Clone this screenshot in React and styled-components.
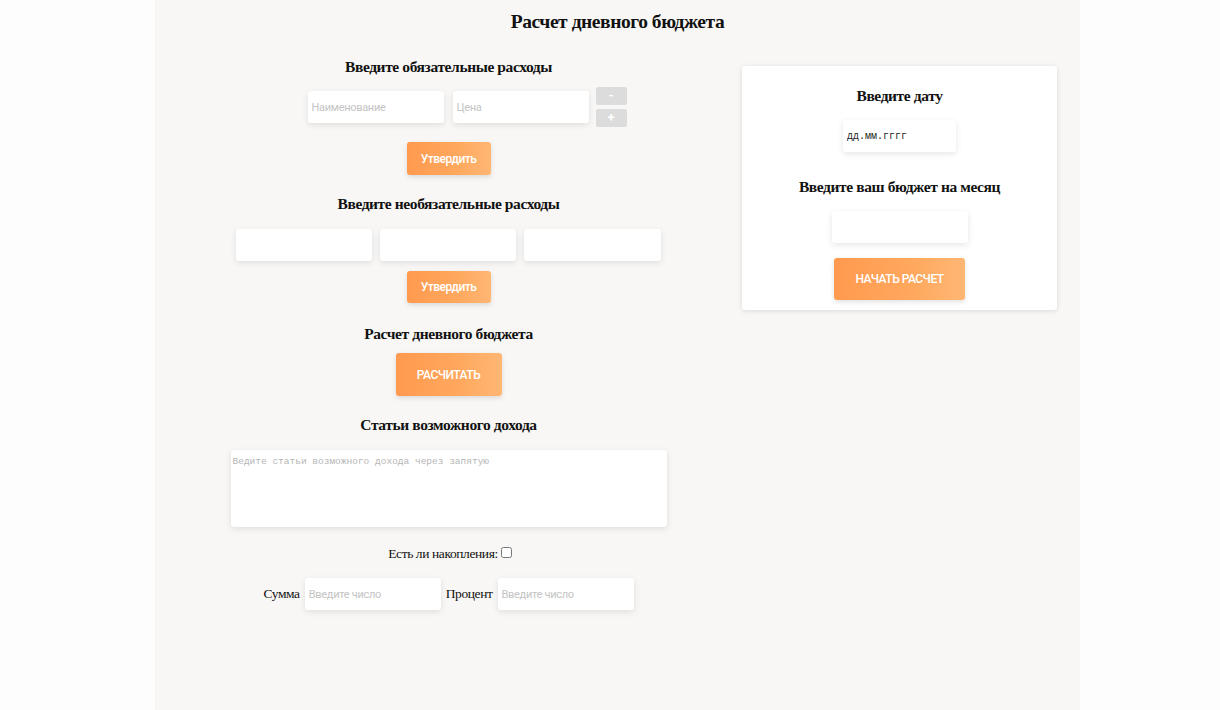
import React from "react";
import styled, { createGlobalStyle } from "styled-components";

const Global = createGlobalStyle`
  html, body { margin: 0; padding: 0; background: #fdfdfd; }
  body { font-family: "Liberation Serif", "Times New Roman", serif; }
  * { box-sizing: border-box; }
`;

const Page = styled.div`
  margin-left: 155px;
  width: 925px;
  min-height: 710px;
  background: #f8f7f5;
  padding: 10px 23px 0 0;
`;

const Title = styled.h1`
  margin: 0;
  font: bold 19.5px/24px "Liberation Serif", serif;
  letter-spacing: -0.45px;
  color: #111;
  text-align: center;
  padding-left: 23px;
`;

const Main = styled.div`
  display: flex;
  align-items: flex-start;
  margin-top: 11px;
`;

const LeftCol = styled.div`
  flex: 0 0 587px;
  display: flex;
  flex-direction: column;
  align-items: center;
`;

const Heading = styled.h2`
  margin: ${(p) => p.$mt || 0}px 0 0;
  font: bold 15.5px/20px "Liberation Serif", serif;
  letter-spacing: -0.4px;
  color: #111;
  text-align: center;
`;

const Row = styled.div`
  display: flex;
  align-items: center;
  gap: ${(p) => p.$gap || 8}px;
  margin-top: ${(p) => p.$mt || 0}px;
  padding-left: ${(p) => p.$pl || 0}px;
`;

const Input = styled.input`
  width: ${(p) => p.$w || 136}px;
  height: 32px;
  border: none;
  border-radius: 3px;
  background: #fff;
  box-shadow: 0 2px 6px rgba(0, 0, 0, 0.1);
  padding: 0 4px;
  font: 11px "Roboto", sans-serif;
  color: #333;
  outline: none;
  margin-top: ${(p) => p.$mt || 0}px;
  &::placeholder { color: #c4c4c4; letter-spacing: -0.3px; }
`;

const DateInput = styled(Input)`
  font: 10px "Liberation Mono", monospace;
  color: #222;
  padding: 0 4px;
`;

const StepButtons = styled.div`
  display: flex;
  flex-direction: column;
  gap: 4px;
  margin-left: -2px;
`;

const StepButton = styled.button`
  width: 31px;
  height: 18px;
  border: none;
  border-radius: 2px;
  background: #dcdcdc;
  color: #fff;
  font: bold 13px/18px "Roboto", sans-serif;
  padding: 0;
`;

const OrangeButton = styled.button`
  width: ${(p) => p.$w}px;
  height: ${(p) => p.$h}px;
  margin-top: ${(p) => p.$mt || 0}px;
  border: none;
  border-radius: 3px;
  background: linear-gradient(90deg, #ff9a4f 0%, #ffa85e 60%, #ffb774 100%);
  box-shadow: 0 2px 5px rgba(0, 0, 0, 0.12);
  color: #fff;
  font: 500 12px "Roboto", sans-serif;
  letter-spacing: -0.5px;
  text-transform: ${(p) => (p.$upper ? "uppercase" : "none")};
  padding: 0;
`;

const TextArea = styled.textarea`
  width: 436px;
  height: 77px;
  margin-top: 15px;
  border: none;
  border-radius: 3px;
  background: #fff;
  box-shadow: 0 2px 6px rgba(0, 0, 0, 0.1);
  resize: none;
  padding: 6px 2px;
  font: 9.5px "Liberation Mono", monospace;
  outline: none;
  &::placeholder { color: #b5b5b5; }
`;

const CheckLine = styled.label`
  display: flex;
  align-items: center;
  gap: 3px;
  margin-top: 19px;
  font: 13.5px/16px "Liberation Serif", serif;
  letter-spacing: -0.4px;
  color: #111;
  margin-left: 3px;
`;

const Check = styled.input`
  width: 11px;
  height: 11px;
  margin: -4px 0 0 0;
`;

const FieldLabel = styled.span`
  font: 13.5px "Liberation Serif", serif;
  letter-spacing: -0.4px;
  color: #111;
`;

const Card = styled.div`
  flex: 0 0 315px;
  margin-top: 21px;
  background: #fff;
  border-radius: 3px;
  box-shadow: 0 1px 5px rgba(0, 0, 0, 0.12);
  padding: 20px 0 10px;
  display: flex;
  flex-direction: column;
  align-items: center;
`;

export default function App() {
  return (
    <>
      <Global />
      <Page>
        <Title>Расчет дневного бюджета</Title>
        <Main>
          <LeftCol>
            <Heading $mt={12}>Введите обязательные расходы</Heading>
            <Row $mt={10} $gap={9} $pl={37}>
              <Input placeholder="Наименование" />
              <Input placeholder="Цена" />
              <StepButtons>
                <StepButton>-</StepButton>
                <StepButton>+</StepButton>
              </StepButtons>
            </Row>
            <OrangeButton $w={84} $h={33} $mt={15}>Утвердить</OrangeButton>
            <Heading $mt={19}>Введите необязательные расходы</Heading>
            <Row $mt={15} $gap={8}>
              <Input />
              <Input />
              <Input $w={137} />
            </Row>
            <OrangeButton $w={84} $h={32} $mt={10}>Утвердить</OrangeButton>
            <Heading $mt={21}>Расчет дневного бюджета</Heading>
            <OrangeButton $w={106} $h={43} $mt={9} $upper>Расчитать</OrangeButton>
            <Heading $mt={19}>Статьи возможного дохода</Heading>
            <TextArea placeholder="Ведите статьи возможного дохода через запятую" />
            <CheckLine>
              Есть ли накопления:
              <Check type="checkbox" />
            </CheckLine>
            <Row $mt={16} $gap={5}>
              <FieldLabel>Сумма</FieldLabel>
              <Input placeholder="Введите число" />
              <FieldLabel>Процент</FieldLabel>
              <Input placeholder="Введите число" />
            </Row>
          </LeftCol>
          <Card>
            <Heading>Введите дату</Heading>
            <DateInput $w={113} $mt={14} defaultValue="дд.мм.гггг" spellCheck={false} readOnly />
            <Heading $mt={25}>Введите ваш бюджет на месяц</Heading>
            <Input $mt={14} />
            <OrangeButton $w={131} $h={42} $mt={15} $upper>Начать расчет</OrangeButton>
          </Card>
        </Main>
      </Page>
    </>
  );
}
